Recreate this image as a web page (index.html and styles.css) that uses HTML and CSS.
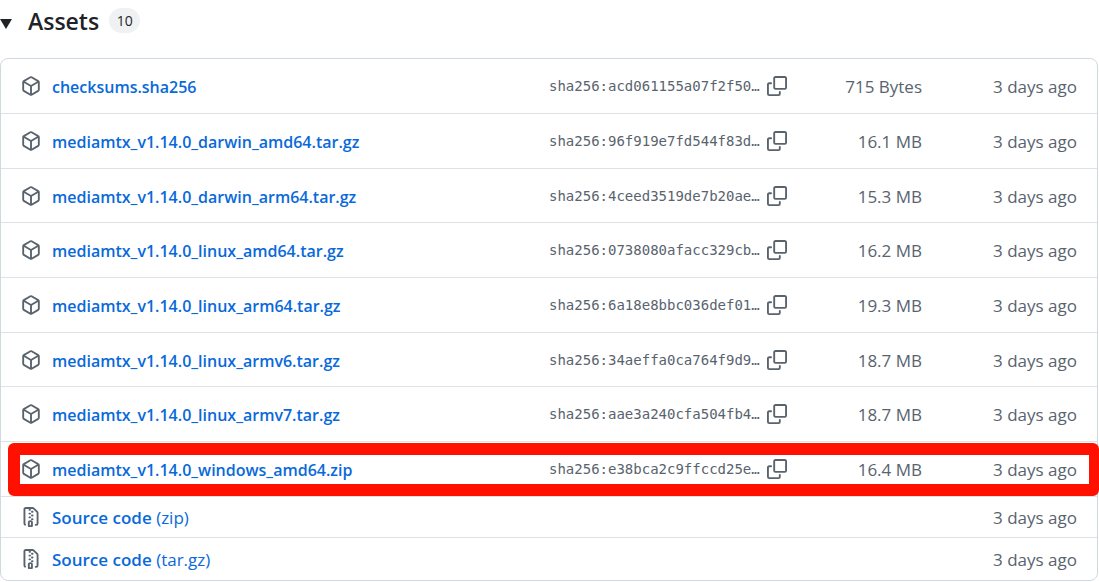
FILE: index.html
```html
<!DOCTYPE html>
<html lang="en">
<head>
    <meta charset="UTF-8">
    <meta name="viewport" content="width=device-width, initial-scale=1.0">
    <title>Release assets</title>
    <link rel="stylesheet" href="styles.css">
</head>
<body>
    <!-- Shared icons -->
    <svg class="sprite" aria-hidden="true">
        <symbol id="package" viewBox="0 0 16 16">
            <path d="m8.878.392 5.25 3.045c.54.314.872.89.872 1.514v6.098a1.75 1.75 0 0 1-.872 1.514l-5.25 3.045a1.75 1.75 0 0 1-1.756 0l-5.25-3.045A1.75 1.75 0 0 1 1 11.049V4.951c0-.624.332-1.201.872-1.514L7.122.392a1.75 1.75 0 0 1 1.756 0ZM7.875 1.69l-4.63 2.685L8 7.133l4.755-2.758-4.63-2.685a.248.248 0 0 0-.25 0ZM2.5 5.677v5.372c0 .09.047.171.125.216l4.625 2.683V8.432Zm6.25 8.271 4.625-2.683a.25.25 0 0 0 .125-.216V5.677L8.75 8.432Z"/>
        </symbol>
        <symbol id="copy" viewBox="0 0 16 16">
            <path d="M0 6.75C0 5.784.784 5 1.75 5h1.5a.75.75 0 0 1 0 1.5h-1.5a.25.25 0 0 0-.25.25v7.5c0 .138.112.25.25.25h7.5a.25.25 0 0 0 .25-.25v-1.5a.75.75 0 0 1 1.5 0v1.5A1.75 1.75 0 0 1 9.25 16h-7.5A1.75 1.75 0 0 1 0 14.25Z"/>
            <path d="M5 1.75C5 .784 5.784 0 6.75 0h7.5C15.216 0 16 .784 16 1.75v7.5A1.75 1.75 0 0 1 14.25 11h-7.5A1.75 1.75 0 0 1 5 9.25Zm1.75-.25a.25.25 0 0 0-.25.25v7.5c0 .138.112.25.25.25h7.5a.25.25 0 0 0 .25-.25v-7.5a.25.25 0 0 0-.25-.25Z"/>
        </symbol>
        <symbol id="file-zip" viewBox="0 0 16 16">
            <path d="M3.5 1.75v11.5c0 .09.048.173.126.217a.75.75 0 0 1-.752 1.298A1.748 1.748 0 0 1 2 13.25V1.75C2 .784 2.784 0 3.75 0h5.586c.464 0 .909.185 1.237.513l2.914 2.914c.329.328.513.773.513 1.237v8.586A1.75 1.75 0 0 1 12.25 15h-.5a.75.75 0 0 1 0-1.5h.5a.25.25 0 0 0 .25-.25V4.664a.25.25 0 0 0-.073-.177L9.513 1.573a.25.25 0 0 0-.177-.073H7.25a.75.75 0 0 1 0 1.5h-.5a.75.75 0 0 1 0-1.5h-3a.25.25 0 0 0-.25.25Zm3.75 8.75h.5c.966 0 1.75.784 1.75 1.75v3a.75.75 0 0 1-.75.75h-2.5a.75.75 0 0 1-.75-.75v-3c0-.966.784-1.75 1.75-1.75ZM6 5.25a.75.75 0 0 1 .75-.75h.5a.75.75 0 0 1 0 1.5h-.5A.75.75 0 0 1 6 5.25Zm.75 2.25h.5a.75.75 0 0 1 0 1.5h-.5a.75.75 0 0 1 0-1.5Zm1.25-.75A.75.75 0 0 1 8.75 6h.5a.75.75 0 0 1 0 1.5h-.5A.75.75 0 0 1 8 6.75ZM8.75 3h.5a.75.75 0 0 1 0 1.5h-.5a.75.75 0 0 1 0-1.5ZM8 9.75A.75.75 0 0 1 8.75 9h.5a.75.75 0 0 1 0 1.5h-.5A.75.75 0 0 1 8 9.75Zm-1 2.5v2.25h1v-2.25a.25.25 0 0 0-.25-.25h-.5a.25.25 0 0 0-.25.25Z"/>
        </symbol>
    </svg>

    <details class="assets" open>
        <summary class="assets-header">
            <svg class="caret" viewBox="0 0 12 10" aria-hidden="true"><path d="M0 0h12L6 10z"/></svg>
            <h3 class="assets-title">Assets</h3>
            <span class="counter">10</span>
        </summary>

        <ul class="asset-list">
            <li class="asset">
                <svg class="icon"><use href="#package"/></svg>
                <a class="asset-name" href="#">checksums.sha256</a>
                <span class="digest">sha256:acd061155a07f2f50…</span>
                <button class="copy-btn" type="button" aria-label="Copy digest"><svg class="icon"><use href="#copy"/></svg></button>
                <span class="size">715 Bytes</span>
                <span class="date">3 days ago</span>
            </li>
            <li class="asset">
                <svg class="icon"><use href="#package"/></svg>
                <a class="asset-name" href="#">mediamtx_v1.14.0_darwin_amd64.tar.gz</a>
                <span class="digest">sha256:96f919e7fd544f83d…</span>
                <button class="copy-btn" type="button" aria-label="Copy digest"><svg class="icon"><use href="#copy"/></svg></button>
                <span class="size">16.1 MB</span>
                <span class="date">3 days ago</span>
            </li>
            <li class="asset">
                <svg class="icon"><use href="#package"/></svg>
                <a class="asset-name" href="#">mediamtx_v1.14.0_darwin_arm64.tar.gz</a>
                <span class="digest">sha256:4ceed3519de7b20ae…</span>
                <button class="copy-btn" type="button" aria-label="Copy digest"><svg class="icon"><use href="#copy"/></svg></button>
                <span class="size">15.3 MB</span>
                <span class="date">3 days ago</span>
            </li>
            <li class="asset">
                <svg class="icon"><use href="#package"/></svg>
                <a class="asset-name" href="#">mediamtx_v1.14.0_linux_amd64.tar.gz</a>
                <span class="digest">sha256:0738080afacc329cb…</span>
                <button class="copy-btn" type="button" aria-label="Copy digest"><svg class="icon"><use href="#copy"/></svg></button>
                <span class="size">16.2 MB</span>
                <span class="date">3 days ago</span>
            </li>
            <li class="asset">
                <svg class="icon"><use href="#package"/></svg>
                <a class="asset-name" href="#">mediamtx_v1.14.0_linux_arm64.tar.gz</a>
                <span class="digest">sha256:6a18e8bbc036def01…</span>
                <button class="copy-btn" type="button" aria-label="Copy digest"><svg class="icon"><use href="#copy"/></svg></button>
                <span class="size">19.3 MB</span>
                <span class="date">3 days ago</span>
            </li>
            <li class="asset">
                <svg class="icon"><use href="#package"/></svg>
                <a class="asset-name" href="#">mediamtx_v1.14.0_linux_armv6.tar.gz</a>
                <span class="digest">sha256:34aeffa0ca764f9d9…</span>
                <button class="copy-btn" type="button" aria-label="Copy digest"><svg class="icon"><use href="#copy"/></svg></button>
                <span class="size">18.7 MB</span>
                <span class="date">3 days ago</span>
            </li>
            <li class="asset">
                <svg class="icon"><use href="#package"/></svg>
                <a class="asset-name" href="#">mediamtx_v1.14.0_linux_armv7.tar.gz</a>
                <span class="digest">sha256:aae3a240cfa504fb4…</span>
                <button class="copy-btn" type="button" aria-label="Copy digest"><svg class="icon"><use href="#copy"/></svg></button>
                <span class="size">18.7 MB</span>
                <span class="date">3 days ago</span>
            </li>
            <li class="asset highlighted">
                <svg class="icon"><use href="#package"/></svg>
                <a class="asset-name" href="#">mediamtx_v1.14.0_windows_amd64.zip</a>
                <span class="digest">sha256:e38bca2c9ffccd25e…</span>
                <button class="copy-btn" type="button" aria-label="Copy digest"><svg class="icon"><use href="#copy"/></svg></button>
                <span class="size">16.4 MB</span>
                <span class="date">3 days ago</span>
            </li>
            <li class="asset source">
                <svg class="icon"><use href="#file-zip"/></svg>
                <a class="asset-name" href="#">Source code <span class="format">(zip)</span></a>
                <span class="date">3 days ago</span>
            </li>
            <li class="asset source">
                <svg class="icon"><use href="#file-zip"/></svg>
                <a class="asset-name" href="#">Source code <span class="format">(tar.gz)</span></a>
                <span class="date">3 days ago</span>
            </li>
        </ul>
    </details>
</body>
</html>
```

FILE: styles.css
```css
* {
    box-sizing: border-box;
}
body {
    margin: 0;
    background-color: #fff;
    color: #1f2328;
    font-family: "Segoe UI", "Open Sans", "Noto Sans", sans-serif;
    font-size: 17px;
    line-height: 24px;
}
.sprite {
    display: none;
}
.assets-header {
    display: flex;
    align-items: center;
    height: 40px;
    margin-bottom: 18px;
    list-style: none;
    cursor: pointer;
}
.caret {
    width: 12px;
    height: 10px;
    margin-top: 8px;
    fill: #1f2328;
}
.assets-title {
    margin: 2px 10px 0 16px;
    font-size: 23px;
    font-weight: 600;
    line-height: 32px;
}
.counter {
    min-width: 31px;
    padding: 0 7px;
    border-radius: 24px;
    background-color: #eff1f3;
    font-size: 14px;
    font-weight: 500;
    line-height: 25px;
    text-align: center;
}
.asset-list {
    margin: 0 1px 0 0;
    padding: 0;
    border: 1px solid #d1d9e0;
    border-radius: 8px;
    list-style: none;
}
.asset {
    position: relative;
    display: grid;
    grid-template-columns: 20px 1fr 206px 32px 135px 155px;
    align-items: center;
    height: 55px;
    padding: 0 20px;
    border-bottom: 1px solid #dde2e7;
    color: #59636e;
}
.asset:nth-child(3n) {
    height: 54px;
}
.asset.source {
    grid-template-columns: 20px 1fr 155px;
    height: 41px;
}
.asset.source:last-child {
    height: 42px;
    border-bottom: none;
}
.icon {
    display: block;
    width: 20px;
    height: 20px;
    fill: #59636e;
}
.asset-name {
    padding: 2px 0 0 11px;
    color: #0969da;
    font-size: 16px;
    font-weight: 600;
    text-decoration: none;
}
.asset-name:hover {
    text-decoration: underline;
}
.source .asset-name {
    font-size: 17px;
}
.format {
    font-weight: 400;
}
.digest {
    font-family: "DejaVu Sans Mono", monospace;
    font-size: 14px;
    white-space: nowrap;
}
.copy-btn {
    justify-self: end;
    padding: 0;
    border: none;
    background: none;
    cursor: pointer;
}
.size, .date {
    padding-top: 2px;
    text-align: right;
    white-space: nowrap;
}
/* red frame drawn over the row */
.highlighted::after {
    content: "";
    position: absolute;
    top: 1px;
    right: -2px;
    bottom: 0;
    left: 7px;
    border: 12px solid #ff1000;
    border-right-width: 10px;
    border-radius: 6px;
    pointer-events: none;
}
```
